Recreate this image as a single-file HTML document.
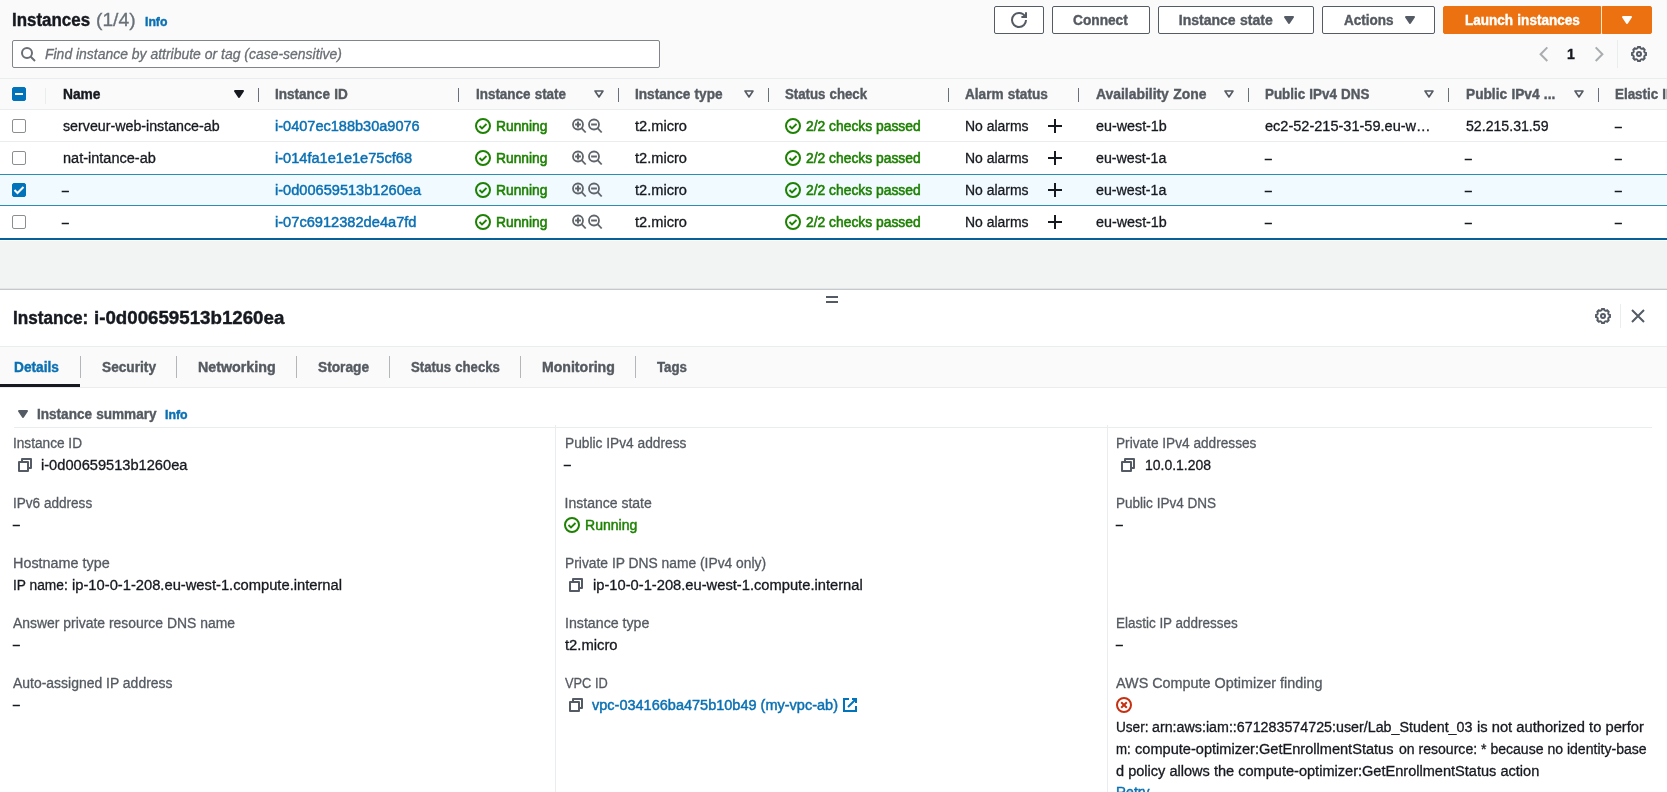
<!DOCTYPE html>
<html lang="en">
<head>
<meta charset="utf-8">
<title>Instances | EC2 Management Console</title>
<style>
html,body{margin:0;padding:0}
body{width:1667px;height:792px;overflow:hidden;position:relative;background:#fff;font-family:"Liberation Sans",sans-serif;font-size:14px;color:#16191f}
.t{position:absolute;white-space:pre;line-height:1;-webkit-text-stroke:0.3px;transform-origin:0 0}
.b{position:absolute;box-sizing:border-box}
.ic{position:absolute;overflow:visible;fill:none;stroke:#545b64;stroke-width:2}
.btn{position:absolute;box-sizing:border-box;top:6px;height:28px;border:1px solid #545b64;border-radius:2px;background:#fff}
.vd{position:absolute;width:1px;background:#eaeded}
.hd{position:absolute;width:1px;top:88px;height:14px;background:#687078}
.cb{position:absolute;box-sizing:border-box;width:14px;height:14px;left:12px;border:1px solid #8c8f91;border-radius:2px;background:#fff}
.cb.on{background:#0073bb;border-color:#0073bb}
</style>
</head>
<body>
<!-- backgrounds -->
<div class="b" style="left:0;top:0;width:1667px;height:110px;background:#fafafa"></div>
<div class="b" style="left:0;top:78px;width:1667px;height:1px;background:#eaeded"></div>
<div class="b" style="left:0;top:109px;width:1667px;height:1px;background:#eaeded"></div>
<div class="b" style="left:0;top:141px;width:1667px;height:1px;background:#eaeded"></div>
<div class="b" style="left:0;top:174px;width:1667px;height:32px;background:#f1faff;border-top:1px solid #2b8db3;border-bottom:1px solid #2b8db3"></div>
<div class="b" style="left:0;top:238px;width:1667px;height:2px;background:#06609a"></div>
<div class="b" style="left:0;top:241px;width:1667px;height:49px;background:#f2f3f3;border-bottom:1px solid #c6c9cc"></div>
<div class="b" style="left:0;top:288px;width:1667px;height:1px;background:#e4e5e6"></div>
<!-- split panel -->
<div class="b" style="left:0;top:346px;width:1667px;height:42px;background:#fafafa;border-top:1px solid #eaeded;border-bottom:1px solid #eaeded"></div>
<div class="b" style="left:0;top:384px;width:80px;height:3px;background:#16191f"></div>
<div class="b" style="left:14px;top:427px;width:1638px;height:1px;background:#eaeded"></div>
<div class="vd" style="left:555px;top:425px;height:367px"></div>
<div class="vd" style="left:1107px;top:425px;height:367px"></div>
<!-- drag handle -->
<div class="b" style="left:826px;top:296px;width:12px;height:2px;background:#545b64"></div>
<div class="b" style="left:826px;top:301px;width:12px;height:2px;background:#545b64"></div>
<!-- search box -->
<div class="b" style="left:12px;top:40px;width:648px;height:28px;border:1px solid #7f8588;border-radius:2px;background:#fff"></div>
<svg class="ic" style="left:20px;top:46px;stroke:#6a6f74" width="16" height="16" viewBox="0 0 16 16"><circle cx="7" cy="7" r="5"/><path d="M15 15l-4.5-4.5"/></svg>
<!-- buttons -->
<div class="btn" style="left:994px;width:50px"></div>
<svg class="ic" style="left:1011px;top:12px" width="16" height="16" viewBox="0 0 16 16"><path d="M10.4 5H15V0.2"/><path d="M15 8a6.957 6.957 0 01-7 7 6.957 6.957 0 01-7-7 6.957 6.957 0 017-7 6.87 6.87 0 016.3 4"/></svg>
<div class="btn" style="left:1052px;width:98px"></div>
<div class="btn" style="left:1158px;width:156px"></div>
<svg class="ic" style="left:1281px;top:12px;fill:#545b64;stroke-linejoin:round" width="16" height="16" viewBox="0 0 16 16"><path d="M4 5h8l-4 6-4-6z"/></svg>
<div class="btn" style="left:1322px;width:113px"></div>
<svg class="ic" style="left:1402px;top:12px;fill:#545b64;stroke-linejoin:round" width="16" height="16" viewBox="0 0 16 16"><path d="M4 5h8l-4 6-4-6z"/></svg>
<div class="b" style="left:1601px;top:6px;width:1px;height:28px;background:#fce8cc"></div>
<div class="btn" style="left:1443px;width:158px;background:#ec7211;border-color:#ec7211;border-radius:2px 0 0 2px"></div>
<div class="btn" style="left:1602px;width:50px;background:#ec7211;border-color:#ec7211;border-radius:0 2px 2px 0"></div>
<svg class="ic" style="left:1619px;top:12px;fill:#fff;stroke:#fff;stroke-linejoin:round" width="16" height="16" viewBox="0 0 16 16"><path d="M4 5h8l-4 6-4-6z"/></svg>
<!-- pagination -->
<svg class="ic" style="left:1536px;top:46px;stroke:#a9adaf" width="16" height="16" viewBox="0 0 16 16"><path d="M11.3 1.4L4.6 8.2l6.7 6.8"/></svg>
<svg class="ic" style="left:1591px;top:46px;stroke:#a9adaf" width="16" height="16" viewBox="0 0 16 16"><path d="M4.7 1.4l6.7 6.8-6.7 6.8"/></svg>
<div class="vd" style="left:1617px;top:40px;height:28px"></div>
<svg class="ic" style="left:1631px;top:46px" width="16" height="16" viewBox="0 0 16 16"><path d="M13.33 5.792a1.942 1.942 0 01.287-1.97 6.984 6.984 0 00-1.44-1.439 1.943 1.943 0 01-3.159-1.308 6.965 6.965 0 00-2.037 0 1.943 1.943 0 01-3.158 1.308 6.962 6.962 0 00-1.44 1.44 1.943 1.943 0 01-1.308 3.158 6.972 6.972 0 000 2.037 1.943 1.943 0 011.308 3.159 6.952 6.952 0 001.44 1.439 1.942 1.942 0 013.158 1.309 6.962 6.962 0 002.037 0 1.942 1.942 0 013.159-1.308 6.962 6.962 0 001.439-1.44 1.943 1.943 0 011.309-3.158 6.972 6.972 0 000-2.037 1.941 1.941 0 01-1.595-1.19z"/><circle cx="8" cy="8" r="2"/></svg>
<!-- table header dividers + sort icons -->
<div class="vd" style="left:45px;top:88px;height:16px"></div>
<div class="hd" style="left:258px"></div><div class="hd" style="left:458px"></div><div class="hd" style="left:618px"></div><div class="hd" style="left:768px"></div><div class="hd" style="left:948px"></div><div class="hd" style="left:1078px"></div><div class="hd" style="left:1248px"></div><div class="hd" style="left:1448px"></div><div class="hd" style="left:1598px"></div>
<svg class="ic" style="left:231px;top:86px;fill:#16191f;stroke:#16191f;stroke-linejoin:round" width="16" height="16" viewBox="0 0 16 16"><path d="M4 5h8l-4 6-4-6z"/></svg>
<svg class="ic" style="left:591px;top:86px;stroke:#545b64;stroke-linejoin:round;stroke-width:1.6" width="16" height="16" viewBox="0 0 16 16"><path d="M4 5h8l-4 6-4-6z"/></svg><svg class="ic" style="left:741px;top:86px;stroke:#545b64;stroke-linejoin:round;stroke-width:1.6" width="16" height="16" viewBox="0 0 16 16"><path d="M4 5h8l-4 6-4-6z"/></svg><svg class="ic" style="left:1221px;top:86px;stroke:#545b64;stroke-linejoin:round;stroke-width:1.6" width="16" height="16" viewBox="0 0 16 16"><path d="M4 5h8l-4 6-4-6z"/></svg><svg class="ic" style="left:1421px;top:86px;stroke:#545b64;stroke-linejoin:round;stroke-width:1.6" width="16" height="16" viewBox="0 0 16 16"><path d="M4 5h8l-4 6-4-6z"/></svg><svg class="ic" style="left:1571px;top:86px;stroke:#545b64;stroke-linejoin:round;stroke-width:1.6" width="16" height="16" viewBox="0 0 16 16"><path d="M4 5h8l-4 6-4-6z"/></svg>
<!-- checkboxes -->
<div class="cb on" style="top:87px"></div><div class="b" style="left:15px;top:93px;width:8px;height:2px;background:#fff"></div>
<div class="cb" style="top:119px"></div>
<div class="cb" style="top:151px"></div>
<div class="cb on" style="top:183px"></div><svg class="ic" style="left:12px;top:183px;stroke:#fff" width="14" height="14" viewBox="0 0 14 14"><path d="M2.5 7l3 3 6-6"/></svg>
<div class="cb" style="top:215px"></div>
<svg class="ic" style="left:475px;top:118px;stroke:#1d8102" width="16" height="16" viewBox="0 0 16 16"><circle cx="8" cy="8" r="7"/><path d="M4.5 8l2.5 2.5 4.5-4.5" stroke-width="1.8"/></svg><svg class="ic" style="left:571px;top:118px;stroke:#60656b;stroke-width:1.8" width="16" height="16" viewBox="0 0 16 16"><circle cx="7" cy="6.5" r="5"/><path d="M10.8 10.3l3.9 4.2"/><path d="M7 3.6v5.8M4.1 6.5h5.8" stroke-width="2"/></svg><svg class="ic" style="left:587.3px;top:118px;stroke:#60656b;stroke-width:1.8" width="16" height="16" viewBox="0 0 16 16"><circle cx="7" cy="6.5" r="5"/><path d="M10.8 10.3l3.9 4.2"/><path d="M4.1 6.5h5.8" stroke-width="2"/></svg><svg class="ic" style="left:785px;top:118px;stroke:#1d8102" width="16" height="16" viewBox="0 0 16 16"><circle cx="8" cy="8" r="7"/><path d="M4.5 8l2.5 2.5 4.5-4.5" stroke-width="1.8"/></svg><svg class="ic" style="left:1047px;top:118px;stroke:#16191f" width="16" height="16" viewBox="0 0 16 16"><path d="M8 1v14M15 8H1"/></svg>
<svg class="ic" style="left:475px;top:150px;stroke:#1d8102" width="16" height="16" viewBox="0 0 16 16"><circle cx="8" cy="8" r="7"/><path d="M4.5 8l2.5 2.5 4.5-4.5" stroke-width="1.8"/></svg><svg class="ic" style="left:571px;top:150px;stroke:#60656b;stroke-width:1.8" width="16" height="16" viewBox="0 0 16 16"><circle cx="7" cy="6.5" r="5"/><path d="M10.8 10.3l3.9 4.2"/><path d="M7 3.6v5.8M4.1 6.5h5.8" stroke-width="2"/></svg><svg class="ic" style="left:587.3px;top:150px;stroke:#60656b;stroke-width:1.8" width="16" height="16" viewBox="0 0 16 16"><circle cx="7" cy="6.5" r="5"/><path d="M10.8 10.3l3.9 4.2"/><path d="M4.1 6.5h5.8" stroke-width="2"/></svg><svg class="ic" style="left:785px;top:150px;stroke:#1d8102" width="16" height="16" viewBox="0 0 16 16"><circle cx="8" cy="8" r="7"/><path d="M4.5 8l2.5 2.5 4.5-4.5" stroke-width="1.8"/></svg><svg class="ic" style="left:1047px;top:150px;stroke:#16191f" width="16" height="16" viewBox="0 0 16 16"><path d="M8 1v14M15 8H1"/></svg>
<svg class="ic" style="left:475px;top:182px;stroke:#1d8102" width="16" height="16" viewBox="0 0 16 16"><circle cx="8" cy="8" r="7"/><path d="M4.5 8l2.5 2.5 4.5-4.5" stroke-width="1.8"/></svg><svg class="ic" style="left:571px;top:182px;stroke:#60656b;stroke-width:1.8" width="16" height="16" viewBox="0 0 16 16"><circle cx="7" cy="6.5" r="5"/><path d="M10.8 10.3l3.9 4.2"/><path d="M7 3.6v5.8M4.1 6.5h5.8" stroke-width="2"/></svg><svg class="ic" style="left:587.3px;top:182px;stroke:#60656b;stroke-width:1.8" width="16" height="16" viewBox="0 0 16 16"><circle cx="7" cy="6.5" r="5"/><path d="M10.8 10.3l3.9 4.2"/><path d="M4.1 6.5h5.8" stroke-width="2"/></svg><svg class="ic" style="left:785px;top:182px;stroke:#1d8102" width="16" height="16" viewBox="0 0 16 16"><circle cx="8" cy="8" r="7"/><path d="M4.5 8l2.5 2.5 4.5-4.5" stroke-width="1.8"/></svg><svg class="ic" style="left:1047px;top:182px;stroke:#16191f" width="16" height="16" viewBox="0 0 16 16"><path d="M8 1v14M15 8H1"/></svg>
<svg class="ic" style="left:475px;top:214px;stroke:#1d8102" width="16" height="16" viewBox="0 0 16 16"><circle cx="8" cy="8" r="7"/><path d="M4.5 8l2.5 2.5 4.5-4.5" stroke-width="1.8"/></svg><svg class="ic" style="left:571px;top:214px;stroke:#60656b;stroke-width:1.8" width="16" height="16" viewBox="0 0 16 16"><circle cx="7" cy="6.5" r="5"/><path d="M10.8 10.3l3.9 4.2"/><path d="M7 3.6v5.8M4.1 6.5h5.8" stroke-width="2"/></svg><svg class="ic" style="left:587.3px;top:214px;stroke:#60656b;stroke-width:1.8" width="16" height="16" viewBox="0 0 16 16"><circle cx="7" cy="6.5" r="5"/><path d="M10.8 10.3l3.9 4.2"/><path d="M4.1 6.5h5.8" stroke-width="2"/></svg><svg class="ic" style="left:785px;top:214px;stroke:#1d8102" width="16" height="16" viewBox="0 0 16 16"><circle cx="8" cy="8" r="7"/><path d="M4.5 8l2.5 2.5 4.5-4.5" stroke-width="1.8"/></svg><svg class="ic" style="left:1047px;top:214px;stroke:#16191f" width="16" height="16" viewBox="0 0 16 16"><path d="M8 1v14M15 8H1"/></svg>

<!-- panel header icons -->
<svg class="ic" style="left:1595px;top:308px" width="16" height="16" viewBox="0 0 16 16"><path d="M13.33 5.792a1.942 1.942 0 01.287-1.97 6.984 6.984 0 00-1.44-1.439 1.943 1.943 0 01-3.159-1.308 6.965 6.965 0 00-2.037 0 1.943 1.943 0 01-3.158 1.308 6.962 6.962 0 00-1.44 1.44 1.943 1.943 0 01-1.308 3.158 6.972 6.972 0 000 2.037 1.943 1.943 0 011.308 3.159 6.952 6.952 0 001.44 1.439 1.942 1.942 0 013.158 1.309 6.962 6.962 0 002.037 0 1.942 1.942 0 013.159-1.308 6.962 6.962 0 001.439-1.44 1.943 1.943 0 011.309-3.158 6.972 6.972 0 000-2.037 1.941 1.941 0 01-1.595-1.19z"/><circle cx="8" cy="8" r="2"/></svg>
<div class="vd" style="left:1620px;top:304px;height:24px"></div>
<svg class="ic" style="left:1630px;top:308px" width="16" height="16" viewBox="0 0 16 16"><path d="M2 2l12 12M14 2L2 14"/></svg>
<!-- tab dividers -->
<div class="b" style="left:80px;top:356px;width:1px;height:22px;background:#b3b7b9"></div>
<div class="b" style="left:176px;top:356px;width:1px;height:22px;background:#b3b7b9"></div>
<div class="b" style="left:296px;top:356px;width:1px;height:22px;background:#b3b7b9"></div>
<div class="b" style="left:389px;top:356px;width:1px;height:22px;background:#b3b7b9"></div>
<div class="b" style="left:520px;top:356px;width:1px;height:22px;background:#b3b7b9"></div>
<div class="b" style="left:635px;top:356px;width:1px;height:22px;background:#b3b7b9"></div>
<!-- summary caret -->
<svg class="ic" style="left:15px;top:406px;fill:#545b64;stroke-linejoin:round" width="16" height="16" viewBox="0 0 16 16"><path d="M4 5h8l-4 6-4-6z"/></svg>
<svg class="ic" style="left:17px;top:457px;stroke-linejoin:round" width="16" height="16" viewBox="0 0 16 16"><path d="M2 5h9v9H2z"/><path d="M5 5V2h9v9h-3"/></svg><svg class="ic" style="left:568px;top:577px;stroke-linejoin:round" width="16" height="16" viewBox="0 0 16 16"><path d="M2 5h9v9H2z"/><path d="M5 5V2h9v9h-3"/></svg><svg class="ic" style="left:568px;top:697px;stroke-linejoin:round" width="16" height="16" viewBox="0 0 16 16"><path d="M2 5h9v9H2z"/><path d="M5 5V2h9v9h-3"/></svg><svg class="ic" style="left:1120px;top:457px;stroke-linejoin:round" width="16" height="16" viewBox="0 0 16 16"><path d="M2 5h9v9H2z"/><path d="M5 5V2h9v9h-3"/></svg><svg class="ic" style="left:564px;top:517px;stroke:#1d8102" width="16" height="16" viewBox="0 0 16 16"><circle cx="8" cy="8" r="7"/><path d="M4.5 8l2.5 2.5 4.5-4.5" stroke-width="1.8"/></svg><svg class="ic" style="left:842px;top:697px;stroke:#0073bb" width="16" height="16" viewBox="0 0 16 16"><path d="M10 2h4v4"/><path d="M6 10l8-8"/><path d="M14 9.048V14H2V2h5"/></svg><svg class="ic" style="left:1116px;top:697px;stroke:#c62f10" width="16" height="16" viewBox="0 0 16 16"><circle cx="8" cy="8" r="7"/><path d="M10.8 5.2L5.2 10.8M10.8 10.8L5.2 5.2"/></svg>
<!-- text -->
<div id="txt" style="position:absolute;left:0;top:0;width:1667px;height:792px;will-change:transform">
<span class="t" style="left:11.9px;top:10.6px;font-size:18px;font-weight:700;transform:scaleX(0.9404);-webkit-text-stroke:0.4px;word-spacing:0.5px;">Instances</span>
<span class="t" style="left:96.0px;top:10.6px;font-size:18px;color:#687078;transform:scaleX(1.0698);">(1/4)</span>
<span class="t" style="left:144.6px;top:15.6px;font-size:12px;font-weight:700;color:#0a70b3;transform:scaleX(1.0182);-webkit-text-stroke:0.4px;word-spacing:0.5px;">Info</span>
<span class="t" style="left:45.0px;top:46.9px;color:#6a6f74;font-style:italic;transform:scaleX(0.9965);">Find instance by attribute or tag (case-sensitive)</span>
<span class="t" style="left:1073.4px;top:12.9px;font-weight:700;color:#555a61;transform:scaleX(0.9786);-webkit-text-stroke:0.4px;word-spacing:0.5px;">Connect</span>
<span class="t" style="left:1178.8px;top:12.9px;font-weight:700;color:#555a61;-webkit-text-stroke:0.4px;word-spacing:0.5px;">Instance state</span>
<span class="t" style="left:1343.7px;top:12.9px;font-weight:700;color:#555a61;transform:scaleX(0.9641);-webkit-text-stroke:0.4px;word-spacing:0.5px;">Actions</span>
<span class="t" style="left:1464.6px;top:12.9px;font-weight:700;color:#ffffff;transform:scaleX(0.9666);-webkit-text-stroke:0.4px;word-spacing:0.5px;">Launch instances</span>
<span class="t" style="left:1567.0px;top:46.6px;font-weight:700;-webkit-text-stroke:0.4px;word-spacing:0.5px;">1</span>
<span class="t" style="left:62.5px;top:87.2px;font-weight:700;transform:scaleX(0.9832);-webkit-text-stroke:0.4px;word-spacing:0.5px;">Name</span>
<span class="t" style="left:275.2px;top:87.2px;font-weight:700;color:#555a61;transform:scaleX(0.9667);-webkit-text-stroke:0.4px;word-spacing:0.5px;">Instance ID</span>
<span class="t" style="left:475.6px;top:87.2px;font-weight:700;color:#555a61;transform:scaleX(0.9587);-webkit-text-stroke:0.4px;word-spacing:0.5px;">Instance state</span>
<span class="t" style="left:635.2px;top:87.2px;font-weight:700;color:#555a61;transform:scaleX(0.9735);-webkit-text-stroke:0.4px;word-spacing:0.5px;">Instance type</span>
<span class="t" style="left:785.2px;top:87.2px;font-weight:700;color:#555a61;transform:scaleX(0.9439);-webkit-text-stroke:0.4px;word-spacing:0.5px;">Status check</span>
<span class="t" style="left:965.2px;top:87.2px;font-weight:700;color:#555a61;transform:scaleX(0.9705);-webkit-text-stroke:0.4px;word-spacing:0.5px;">Alarm status</span>
<span class="t" style="left:1095.5px;top:87.2px;font-weight:700;color:#555a61;transform:scaleX(0.9925);-webkit-text-stroke:0.4px;word-spacing:0.5px;">Availability Zone</span>
<span class="t" style="left:1265.3px;top:87.2px;font-weight:700;color:#555a61;transform:scaleX(0.9564);-webkit-text-stroke:0.4px;word-spacing:0.5px;">Public IPv4 DNS</span>
<span class="t" style="left:1465.7px;top:87.2px;font-weight:700;color:#555a61;transform:scaleX(0.9785);-webkit-text-stroke:0.4px;word-spacing:0.5px;">Public IPv4 ...</span>
<span class="t" style="left:1615.4px;top:87.2px;font-weight:700;color:#555a61;transform:scaleX(0.9559);-webkit-text-stroke:0.4px;word-spacing:0.5px;">Elastic IP</span>
<span class="t" style="left:62.5px;top:119.3px;transform:scaleX(1.0164);">serveur-web-instance-ab</span>
<span class="t" style="left:275.2px;top:119.3px;color:#0a70b3;transform:scaleX(1.0383);-webkit-text-stroke:0.45px;">i-0407ec188b30a9076</span>
<span class="t" style="left:496.0px;top:119.3px;color:#1d8102;transform:scaleX(0.9874);-webkit-text-stroke:0.55px;">Running</span>
<span class="t" style="left:635.2px;top:119.3px;transform:scaleX(1.0442);">t2.micro</span>
<span class="t" style="left:805.6px;top:119.3px;color:#1d8102;transform:scaleX(0.9891);-webkit-text-stroke:0.55px;">2/2 checks passed</span>
<span class="t" style="left:965.2px;top:119.3px;transform:scaleX(0.9969);">No alarms</span>
<span class="t" style="left:1095.5px;top:119.3px;transform:scaleX(1.0222);">eu-west-1b</span>
<span class="t" style="left:1265.3px;top:119.3px;transform:scaleX(1.0380);">ec2-52-215-31-59.eu-w…</span>
<span class="t" style="left:1465.7px;top:119.3px;transform:scaleX(1.0092);">52.215.31.59</span>
<span class="t" style="left:1615.1px;top:118.9px;transform:scaleX(.84);-webkit-text-stroke:0.75px;">–</span>
<span class="t" style="left:62.5px;top:151.3px;transform:scaleX(1.0367);">nat-intance-ab</span>
<span class="t" style="left:275.2px;top:151.3px;color:#0a70b3;transform:scaleX(1.0413);-webkit-text-stroke:0.45px;">i-014fa1e1e1e75cf68</span>
<span class="t" style="left:496.0px;top:151.3px;color:#1d8102;transform:scaleX(0.9874);-webkit-text-stroke:0.55px;">Running</span>
<span class="t" style="left:635.2px;top:151.3px;transform:scaleX(1.0442);">t2.micro</span>
<span class="t" style="left:805.6px;top:151.3px;color:#1d8102;transform:scaleX(0.9891);-webkit-text-stroke:0.55px;">2/2 checks passed</span>
<span class="t" style="left:965.2px;top:151.3px;transform:scaleX(0.9969);">No alarms</span>
<span class="t" style="left:1095.5px;top:151.3px;transform:scaleX(1.0149);">eu-west-1a</span>
<span class="t" style="left:1265.0px;top:150.9px;transform:scaleX(.84);-webkit-text-stroke:0.75px;">–</span>
<span class="t" style="left:1465.4px;top:150.9px;transform:scaleX(.84);-webkit-text-stroke:0.75px;">–</span>
<span class="t" style="left:1615.1px;top:150.9px;transform:scaleX(.84);-webkit-text-stroke:0.75px;">–</span>
<span class="t" style="left:62.2px;top:182.9px;transform:scaleX(.84);-webkit-text-stroke:0.75px;">–</span>
<span class="t" style="left:275.2px;top:183.3px;color:#0a70b3;transform:scaleX(1.0418);-webkit-text-stroke:0.45px;">i-0d00659513b1260ea</span>
<span class="t" style="left:496.0px;top:183.3px;color:#1d8102;transform:scaleX(0.9874);-webkit-text-stroke:0.55px;">Running</span>
<span class="t" style="left:635.2px;top:183.3px;transform:scaleX(1.0442);">t2.micro</span>
<span class="t" style="left:805.6px;top:183.3px;color:#1d8102;transform:scaleX(0.9891);-webkit-text-stroke:0.55px;">2/2 checks passed</span>
<span class="t" style="left:965.2px;top:183.3px;transform:scaleX(0.9969);">No alarms</span>
<span class="t" style="left:1095.5px;top:183.3px;transform:scaleX(1.0149);">eu-west-1a</span>
<span class="t" style="left:1265.0px;top:182.9px;transform:scaleX(.84);-webkit-text-stroke:0.75px;">–</span>
<span class="t" style="left:1465.4px;top:182.9px;transform:scaleX(.84);-webkit-text-stroke:0.75px;">–</span>
<span class="t" style="left:1615.1px;top:182.9px;transform:scaleX(.84);-webkit-text-stroke:0.75px;">–</span>
<span class="t" style="left:62.2px;top:214.9px;transform:scaleX(.84);-webkit-text-stroke:0.75px;">–</span>
<span class="t" style="left:275.2px;top:215.3px;color:#0a70b3;transform:scaleX(1.0445);-webkit-text-stroke:0.45px;">i-07c6912382de4a7fd</span>
<span class="t" style="left:496.0px;top:215.3px;color:#1d8102;transform:scaleX(0.9874);-webkit-text-stroke:0.55px;">Running</span>
<span class="t" style="left:635.2px;top:215.3px;transform:scaleX(1.0442);">t2.micro</span>
<span class="t" style="left:805.6px;top:215.3px;color:#1d8102;transform:scaleX(0.9891);-webkit-text-stroke:0.55px;">2/2 checks passed</span>
<span class="t" style="left:965.2px;top:215.3px;transform:scaleX(0.9969);">No alarms</span>
<span class="t" style="left:1095.5px;top:215.3px;transform:scaleX(1.0222);">eu-west-1b</span>
<span class="t" style="left:1265.0px;top:214.9px;transform:scaleX(.84);-webkit-text-stroke:0.75px;">–</span>
<span class="t" style="left:1465.4px;top:214.9px;transform:scaleX(.84);-webkit-text-stroke:0.75px;">–</span>
<span class="t" style="left:1615.1px;top:214.9px;transform:scaleX(.84);-webkit-text-stroke:0.75px;">–</span>
<span class="t" style="left:13.4px;top:309.2px;font-size:18px;font-weight:700;transform:scaleX(0.9528);-webkit-text-stroke:0.4px;word-spacing:0.5px;">Instance:</span>
<span class="t" style="left:94.0px;top:309.2px;font-size:18px;font-weight:700;transform:scaleX(1.0390);-webkit-text-stroke:0.4px;word-spacing:0.5px;">i-0d00659513b1260ea</span>
<span class="t" style="left:14.4px;top:359.5px;font-weight:700;color:#0a70b3;transform:scaleX(0.9777);-webkit-text-stroke:0.4px;word-spacing:0.5px;">Details</span>
<span class="t" style="left:101.5px;top:359.5px;font-weight:700;color:#555a61;transform:scaleX(0.9774);-webkit-text-stroke:0.4px;word-spacing:0.5px;">Security</span>
<span class="t" style="left:197.5px;top:359.5px;font-weight:700;color:#555a61;transform:scaleX(1.0192);-webkit-text-stroke:0.4px;word-spacing:0.5px;">Networking</span>
<span class="t" style="left:317.5px;top:359.5px;font-weight:700;color:#555a61;transform:scaleX(0.9803);-webkit-text-stroke:0.4px;word-spacing:0.5px;">Storage</span>
<span class="t" style="left:410.7px;top:359.5px;font-weight:700;color:#555a61;transform:scaleX(0.9380);-webkit-text-stroke:0.4px;word-spacing:0.5px;">Status checks</span>
<span class="t" style="left:542.4px;top:359.5px;font-weight:700;color:#555a61;transform:scaleX(1.0067);-webkit-text-stroke:0.4px;word-spacing:0.5px;">Monitoring</span>
<span class="t" style="left:657.2px;top:359.5px;font-weight:700;color:#555a61;transform:scaleX(0.9481);-webkit-text-stroke:0.4px;word-spacing:0.5px;">Tags</span>
<span class="t" style="left:36.5px;top:407.3px;font-weight:700;color:#555a61;transform:scaleX(0.9680);-webkit-text-stroke:0.4px;word-spacing:0.5px;">Instance summary</span>
<span class="t" style="left:164.6px;top:409.0px;font-size:12px;font-weight:700;color:#0a70b3;transform:scaleX(1.0273);-webkit-text-stroke:0.4px;word-spacing:0.5px;">Info</span>
<span class="t" style="left:13.2px;top:436.1px;color:#555a61;transform:scaleX(0.9742);">Instance ID</span>
<span class="t" style="left:40.8px;top:457.7px;transform:scaleX(1.0447);">i-0d00659513b1260ea</span>
<span class="t" style="left:13.2px;top:496.1px;color:#555a61;transform:scaleX(0.9692);">IPv6 address</span>
<span class="t" style="left:12.9px;top:517.3px;transform:scaleX(.84);-webkit-text-stroke:0.75px;">–</span>
<span class="t" style="left:13.2px;top:556.1px;color:#555a61;transform:scaleX(1.0268);">Hostname type</span>
<span class="t" style="left:13.2px;top:577.7px;transform:scaleX(0.9806);">IP name:</span>
<span class="t" style="left:72.0px;top:577.7px;transform:scaleX(1.0514);">ip-10-0-1-208.eu-west-1.compute.internal</span>
<span class="t" style="left:13.2px;top:616.1px;color:#555a61;transform:scaleX(0.9941);">Answer private resource DNS name</span>
<span class="t" style="left:12.9px;top:637.3px;transform:scaleX(.84);-webkit-text-stroke:0.75px;">–</span>
<span class="t" style="left:13.2px;top:676.1px;color:#555a61;transform:scaleX(0.9964);">Auto-assigned IP address</span>
<span class="t" style="left:12.9px;top:697.3px;transform:scaleX(.84);-webkit-text-stroke:0.75px;">–</span>
<span class="t" style="left:564.6px;top:436.1px;color:#555a61;transform:scaleX(0.9811);">Public IPv4 address</span>
<span class="t" style="left:564.3px;top:457.3px;transform:scaleX(.84);-webkit-text-stroke:0.75px;">–</span>
<span class="t" style="left:564.6px;top:496.1px;color:#555a61;">Instance state</span>
<span class="t" style="left:584.6px;top:517.7px;color:#1d8102;transform:scaleX(1.0028);-webkit-text-stroke:0.45px;">Running</span>
<span class="t" style="left:564.6px;top:556.1px;color:#555a61;transform:scaleX(0.9877);">Private IP DNS name (IPv4 only)</span>
<span class="t" style="left:592.5px;top:577.7px;transform:scaleX(1.0502);">ip-10-0-1-208.eu-west-1.compute.internal</span>
<span class="t" style="left:564.6px;top:616.1px;color:#555a61;transform:scaleX(1.0134);">Instance type</span>
<span class="t" style="left:564.6px;top:637.7px;transform:scaleX(1.0563);">t2.micro</span>
<span class="t" style="left:564.6px;top:676.1px;color:#555a61;transform:scaleX(0.9146);">VPC ID</span>
<span class="t" style="left:592.3px;top:697.7px;color:#0a70b3;transform:scaleX(1.0363);-webkit-text-stroke:0.45px;">vpc-034166ba475b10b49 (my-vpc-ab)</span>
<span class="t" style="left:1116.0px;top:436.1px;color:#555a61;transform:scaleX(0.9752);">Private IPv4 addresses</span>
<span class="t" style="left:1144.5px;top:457.7px;transform:scaleX(0.9974);">10.0.1.208</span>
<span class="t" style="left:1116.0px;top:496.1px;color:#555a61;transform:scaleX(0.9673);">Public IPv4 DNS</span>
<span class="t" style="left:1115.7px;top:517.3px;transform:scaleX(.84);-webkit-text-stroke:0.75px;">–</span>
<span class="t" style="left:1116.0px;top:616.1px;color:#555a61;transform:scaleX(0.9613);">Elastic IP addresses</span>
<span class="t" style="left:1115.7px;top:637.3px;transform:scaleX(.84);-webkit-text-stroke:0.75px;">–</span>
<span class="t" style="left:1116.0px;top:676.1px;color:#555a61;transform:scaleX(1.0274);">AWS Compute Optimizer finding</span>
<span class="t" style="left:1116.0px;top:720.0px;transform:scaleX(0.9715);">User:</span>
<span class="t" style="left:1151.7px;top:720.0px;transform:scaleX(1.0189);">arn:aws:iam::671283574725:user/Lab_Student_03</span>
<span class="t" style="left:1476.5px;top:720.0px;transform:scaleX(1.0512);">is not authorized to perfor</span>
<span class="t" style="left:1116.0px;top:741.9px;transform:scaleX(0.9446);">m:</span>
<span class="t" style="left:1135.3px;top:741.9px;transform:scaleX(1.0414);">compute-optimizer:GetEnrollmentStatus</span>
<span class="t" style="left:1398.6px;top:741.9px;transform:scaleX(1.0036);">on resource: * because no identity-base</span>
<span class="t" style="left:1116.0px;top:763.8px;transform:scaleX(1.0401);">d policy allows the compute-optimizer:GetEnrollmentStatus action</span>
<span class="t" style="left:1116.0px;top:784.8px;color:#0a70b3;-webkit-text-stroke:0.45px;">Retry</span>
</div>
</body>
</html>
